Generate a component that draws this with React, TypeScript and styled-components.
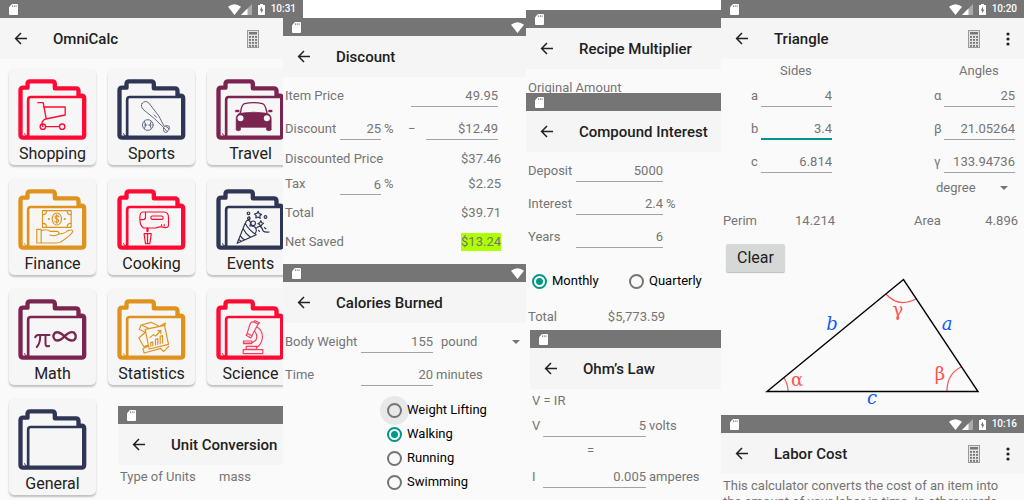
import React from "react";
import styled, { createGlobalStyle } from "styled-components";

const GlobalStyle = createGlobalStyle`
  * { box-sizing: border-box; }
  body { margin: 0; background: #fff; color: #757575; font: 13px/18px Roboto, sans-serif; }
  button, input, select { font: inherit; color: inherit; }
`;

/* ---------- page layout ---------- */

const Collage = styled.main`
  display: grid;
  grid-template-columns: 283fr 243fr 195fr 303fr;
  grid-template-rows: minmax(0, 1fr);
  height: 100vh;
  overflow: hidden;
`;

const Column = styled.div<{ $top?: number }>`
  position: relative;
  display: flex;
  flex-direction: column;
  min-width: 0;
  margin-top: ${(p) => p.$top ?? 0}px;
  background: #fafafa;
`;

const Screen = styled.section<{ $grow?: boolean; $inset?: number }>`
  flex: ${(p) => (p.$grow ? "1 0 auto" : "none")};
  margin-left: ${(p) => p.$inset ?? 0}px;
  background: #fafafa;
  overflow: hidden;
`;

const WideScreen = styled(Screen)`
  width: calc(100% + 20px);
`;

const FloatingScreen = styled(Screen)`
  position: absolute;
  right: 0;
  bottom: 0;
  width: 165px;
  height: 94px;
`;

const StatusBar = styled.div`
  display: flex;
  align-items: center;
  height: 18px;
  padding: 0 7px 0 9px;
  background: #757575;
  color: #fff;
  font-size: 10px;
  font-weight: 500;
`;

const StatusIcons = styled.div<{ $edge?: boolean }>`
  display: flex;
  align-items: center;
  margin-left: auto;
  margin-right: ${(p) => (p.$edge ? -5 : 0)}px;
`;

const Clock = styled.time`
  margin-left: 6px;
`;

const Toolbar = styled.header`
  display: flex;
  align-items: center;
  height: 41px;
  padding-left: 14px;
  background: #f5f5f5;
  color: #212121;
`;

const Title = styled.h2`
  flex: 1;
  margin: 0 0 0 25px;
  font-size: 15px;
  font-weight: 500;
  white-space: nowrap;
`;

const IconButton = styled.button<{ $right?: number }>`
  display: flex;
  margin: 0 ${(p) => p.$right ?? 0}px 0 0;
  padding: 0;
  border: 0;
  background: none;
`;

/* ---------- form parts ---------- */

const Form = styled.div<{ $top?: number; $bottom?: number }>`
  padding: ${(p) => p.$top ?? 2}px 0 ${(p) => p.$bottom ?? 0}px 2px;
  white-space: nowrap;
`;

const Row = styled.div<{ $h?: number; $right?: number }>`
  display: flex;
  align-items: center;
  height: ${(p) => p.$h ?? 33}px;
  padding-right: ${(p) => p.$right ?? 0}px;
`;

const Label = styled.label<{ $w?: number }>`
  flex: none;
  width: ${(p) => (p.$w ? `${p.$w}px` : "auto")};
`;

const Caption = styled.span<{ $w?: number; $left?: number }>`
  flex: none;
  width: ${(p) => (p.$w ? `${p.$w}px` : "auto")};
  margin-left: ${(p) => p.$left ?? 0}px;
`;

const Field = styled.input<{ $w: number; $active?: boolean; $end?: boolean }>`
  width: ${(p) => p.$w}px;
  height: 22px;
  margin: 0 0 0 ${(p) => (p.$end ? "auto" : 0)};
  padding: 1px 0 0;
  border: 0;
  border-bottom: ${(p) => (p.$active ? "2px solid #009688" : "1px solid #a3a3a3")};
  border-radius: 0;
  background: none;
  text-align: right;
  outline: none;
`;

const Unit = styled.span<{ $w?: number }>`
  width: ${(p) => (p.$w ? `${p.$w}px` : "auto")};
  margin-left: 3px;
`;

const Value = styled.output<{ $w?: number; $highlight?: boolean }>`
  width: ${(p) => (p.$w ? `${p.$w}px` : "auto")};
  margin-left: ${(p) => (p.$w ? 0 : "auto")};
  text-align: right;
  background: ${(p) => (p.$highlight ? "#aeff00" : "none")};
`;

const SelectBox = styled.div<{ $gap: number }>`
  display: flex;
  flex: 1;
  align-items: center;
  margin-left: ${(p) => p.$gap}px;
`;

const Select = styled.select`
  flex: 1;
  min-width: 0;
  padding: 0;
  border: 0;
  background: none;
  appearance: none;
`;

const RadioLabel = styled.label<{ $w?: number }>`
  display: flex;
  align-items: center;
  gap: 5px;
  width: ${(p) => (p.$w ? `${p.$w}px` : "auto")};
  color: #000;
`;

const Radio = styled.input.attrs({ type: "radio" })<{ $ripple?: boolean }>`
  appearance: none;
  width: 15px;
  height: 15px;
  margin: 0;
  border: 2px solid #757575;
  border-radius: 50%;
  background: ${(p) => (p.$ripple ? "#e8e8e8" : "none")};
  box-shadow: ${(p) => (p.$ripple ? "0 0 0 7px #e8e8e8" : "none")};
  &:checked {
    border-color: #009688;
    background: radial-gradient(circle, #009688 3px, transparent 4px);
  }
`;

const RadioList = styled.div`
  display: flex;
  flex-direction: column;
  padding: 7px 0 0 102px;
`;

const RadioRow = styled(Row)`
  padding-left: 4px;
`;

/* ---------- category cards ---------- */

const CardGrid = styled.nav`
  display: grid;
  grid-template-columns: repeat(3, 1fr);
  gap: 14px 12px;
  padding: 10px 9px;
`;

const Card = styled.a`
  display: flex;
  flex-direction: column;
  align-items: center;
  gap: 3px;
  height: 96px;
  padding-top: 10px;
  border-radius: 5px;
  background: #f6f6f6;
  box-shadow: 0 2px 2px rgba(0, 0, 0, 0.22), 0 0 2px rgba(0, 0, 0, 0.06);
  color: #212121;
  font-size: 16px;
  line-height: 22px;
  text-decoration: none;
`;

const FolderSvg = styled.svg`
  flex: none;
`;

/* ---------- triangle screen ---------- */

const TriangleGrid = styled.div`
  display: flex;
  justify-content: space-between;
  padding-right: 9px;
`;

const Side = styled.div<{ $left: number }>`
  width: ${(p) => p.$left + 81}px;
  padding-left: ${(p) => p.$left}px;
`;

const SideHeading = styled.div<{ $shift: number }>`
  height: 20px;
  padding: 3px 0 0 ${(p) => p.$shift}px;
`;

const ClearButton = styled.button`
  display: block;
  width: 59px;
  height: 28px;
  margin: 14px 0 0 5px;
  padding: 0;
  border: 0;
  border-radius: 2px;
  background: #d6d7d7;
  box-shadow: 0 1px 1px rgba(0, 0, 0, 0.25);
  color: #212121;
  font-size: 16px;
`;

const Figure = styled.div`
  display: flex;
  justify-content: center;
  height: 143px;
  padding-top: 2px;
`;

const Paragraph = styled.p`
  margin: 0;
  padding: 4px 0 0 2px;
  line-height: 16px;
  white-space: nowrap;
`;

/* ---------- icons ---------- */

const CardIcon = () => (
  <svg width="9" height="11" viewBox="0 0 9 11">
    <path d="M3 0H8Q9 0 9 1V10Q9 11 8 11H1Q0 11 0 10V3.2Z" fill="#fff" />
    <path d="M3.5 1.3v1.8M5.3 1.3v1.8M7.1 1.3v1.8" stroke="#757575" strokeWidth=".8" />
  </svg>
);

const Wifi = () => (
  <svg width="13" height="11" viewBox="0 0 13 11">
    <path d="M0 2.8Q6.5-2.4 13 2.8L6.5 11Z" fill="#fff" />
  </svg>
);

const Signal = () => (
  <svg width="11" height="11" viewBox="0 0 11 11">
    <path d="M11 0V11H0Z" fill="#aaa" />
    <path d="M6.5 4.5V11H0Z" fill="#fff" />
  </svg>
);

const BatterySvg = styled.svg`
  margin-left: 6px;
`;

const Battery = () => (
  <BatterySvg width="7" height="11" viewBox="0 0 7 11">
    <path d="M2 0h3v1h1.4q.6 0 .6.6v8.800q0 .6-.6.6H.6Q0 11 0 10.400V1.600Q0 1 .6 1H2Z" fill="#fff" />
    <path d="M4 2.500 1.700 6.500H3.200V9.500L5.400 5.400H4Z" fill="#757575" />
  </BatterySvg>
);

const ArrowLeft = () => (
  <svg width="14" height="14" viewBox="0 0 14 14" fill="none" stroke="#212121" strokeWidth="1.500">
    <path d="M13 6.500H2M7 1 1.600 6.500 7 12" />
  </svg>
);

const Calculator = () => (
  <svg width="12" height="18" viewBox="0 0 12 18">
    <rect x=".5" y=".5" width="11" height="17" fill="#e4e4e4" stroke="#999" />
    <rect x="2" y="2" width="8" height="2.500" fill="#777" />
    {[6, 9, 12, 15].map((y) =>
      [2, 5, 8].map((x) => <rect key={`${x}-${y}`} x={x} y={y} width="2" height="1.800" fill="#777" />)
    )}
  </svg>
);

const MoreDots = () => (
  <svg width="4" height="14" viewBox="0 0 4 14" fill="#212121">
    <circle cx="2" cy="2" r="1.600" />
    <circle cx="2" cy="7" r="1.600" />
    <circle cx="2" cy="12" r="1.600" />
  </svg>
);

const Caret = () => (
  <svg width="8" height="4" viewBox="0 0 8 4">
    <path d="M0 0H8L4 4Z" fill="#757575" />
  </svg>
);

const RED = "#ff0a33";
const NAVY = "#2f3655";
const PLUM = "#7b2450";
const GOLD = "#df931c";

const Folder = ({ color, children }: { color: string; children?: React.ReactNode }) => (
  <FolderSvg width="69" height="61" viewBox="0 0 206 183" fill="none" stroke={color} strokeLinejoin="round" strokeLinecap="round">
    <path
      strokeWidth="13"
      d="M7 168Q7 176 15 176H190Q198 176 198 168V58Q198 50 190 50H181V36Q181 28 173 28H110V15Q110 7 102 7H36Q28 7 28 15V26H15Q7 26 7 34Z"
    />
    <path strokeWidth="8" d="M30 174V62Q30 54 38 54H194" />
    <path strokeWidth="3" d="M19 164Q20 171 28 172" />
    <g strokeWidth="4">{children}</g>
  </FolderSvg>
);

const Cart = () => (
  <>
    <path d="M59 71H75L84 119Q66 126 74 142M76 84H141V108L83 120M84 143H122" />
    <circle cx="74" cy="143" r="8" />
    <circle cx="132" cy="143" r="8" />
  </>
);

const Baseball = () => (
  <g strokeWidth="3" stroke="#646a86">
    <path d="M75 73Q84 62 95 72L125 111 141 142Q150 138 156 142Q160 149 149 160Q139 162 139 151L139 145 111 118 80 93Q68 81 75 73ZM111 108 118 115M139 145 149 157M145 141 155 149" />
    <circle cx="92" cy="138" r="16" />
    <path d="M82 127Q90 138 82 149M102 127Q94 138 102 149M82 138H89M95 138H102" />
  </g>
);

const Car = () => (
  <g>
    <path d="M73 101Q76 77 85 74Q112 68 139 74Q148 77 152 101" />
    <path d="M58 93H69V99H58ZM157 93H168V99H157Z" fill={PLUM} strokeWidth="1" />
    <path d="M70 103Q112 96 154 103Q166 108 165 122V153Q158 158 151 153V145H73V153Q66 158 60 153V122Q59 108 70 103Z" fill={PLUM} strokeWidth="2" />
    <circle cx="73" cy="118" r="9" fill="#f6f6f6" stroke="none" />
    <circle cx="152" cy="118" r="9" fill="#f6f6f6" stroke="none" />
  </g>
);

const Money = () => (
  <g strokeWidth="3.500">
    <rect x="73" y="65" width="86" height="50" />
    <ellipse cx="116" cy="90" rx="14" ry="18" />
    <path d="M122 83Q116 77 111 83Q110 89 116 90Q123 92 121 97Q116 102 110 97M116 77V103" />
    <path d="M85 66Q85 77 74 77M147 66Q147 77 158 77M74 103Q85 103 85 114M158 103Q147 103 147 114" />
    <circle cx="92" cy="90" r="1.500" />
    <circle cx="140" cy="90" r="1.500" />
    <path d="M56 121H69V162H56ZM69 126Q84 118 96 127H117Q125 129 121 136Q111 143 95 138M122 135Q138 135 149 125Q162 120 164 127Q160 138 129 158Q124 162 112 162H69" />
  </g>
);

const Mixer = () => (
  <g strokeWidth="3.500">
    <path d="M76 69H140Q154 69 154 86V108Q154 116 144 116Q130 111 116 117H79Q68 110 68 91Q67 70 76 69ZM68 92H78Q85 92 85 85V70" />
    <rect x="101" y="81" width="37" height="10" rx="5" />
    <path strokeWidth="7" d="M91 119V126" />
    <path d="M81 134H102V137L98 164H85L81 137ZM91 135V164M133 107V110M141 107V110" />
  </g>
);

const Party = () => (
  <g strokeWidth="3.500">
    <path d="M63 163 87 103Q98 124 120 137ZM81 119Q88 134 103 145M72 140Q77 148 86 153M67 151 75 157" />
    <circle cx="111" cy="103" r="7" />
    <path d="M88 103Q90 92 98 94 106 98 101 111Q116 108 120 121 122 128 116 134M119 119Q133 102 141 126 146 131 159 129M99 92V83" />
    <circle cx="97" cy="73" r="4" />
    <circle cx="98" cy="88" r="4" />
    <circle cx="148" cy="84" r="4" />
    <path d="M126 67 129 74 136 76 131 81 132 88 125 84 119 87 120 80 115 75 122 73ZM134 95 137 101 142 103 137 107 134 112 130 106 125 104 131 101Z" />
    <path d="M127 124 130 127M145 116 149 119" />
  </g>
);

const PiInfinity = () => (
  <g>
    <path strokeWidth="6" d="M51 115Q54 107 62 108H94M66 109Q67 132 56 144M82 109V135Q82 144 93 141" />
    <path strokeWidth="7" d="M139 112Q122 96 111 101Q100 112 111 123Q122 129 139 112Q156 95 168 101Q178 112 168 123Q156 129 139 112Z" />
  </g>
);

const Chart = () => (
  <g strokeWidth="3.500">
    <path d="M84 91 142 79 154 136 96 150ZM93 87 72 78 66 91 76 96M72 78 102 70 123 80M142 81 145 72 130 80M76 96 84 100M82 102 65 117 80 143 92 139M92 142 77 149 81 162 131 148 139 158 155 142" />
    <path d="M101 142V131L107 129V140M115 138V121L122 119V136M129 134V112L136 110V132M98 116 109 107 116 111 131 94M122 95H131V104" />
  </g>
);

const Microscope = () => (
  <g strokeWidth="3.500" stroke="#f83e5c">
    <path d="M102 74Q105 68 112 69L126 75 107 110 93 103ZM112 69 116 65 130 71 126 76M93 104 90 109 104 117 108 111" />
    <path d="M122 84Q142 94 138 121Q134 139 120 146M116 98Q125 108 120 122Q113 132 100 132H83M82 126H107V134H82ZM90 142H122V151H90ZM81 152H140V164H81Z" />
  </g>
);

/* ---------- shared pieces ---------- */

type TopBarsProps = { title: string; time?: string; edge?: boolean; calc?: boolean; more?: boolean };

const TopBars = ({ title, time, edge, calc, more }: TopBarsProps) => (
  <>
    <StatusBar>
      <CardIcon />
      <StatusIcons $edge={edge}>
        {(time || edge) && <Wifi />}
        {time && (
          <>
            <Signal />
            <Battery />
            <Clock>{time}</Clock>
          </>
        )}
      </StatusIcons>
    </StatusBar>
    <Toolbar>
      <IconButton aria-label="Back">
        <ArrowLeft />
      </IconButton>
      <Title>{title}</Title>
      {calc && (
        <IconButton aria-label="Calculator" $right={more ? 26 : 44}>
          <Calculator />
        </IconButton>
      )}
      {more && (
        <IconButton aria-label="More options" $right={14}>
          <MoreDots />
        </IconButton>
      )}
    </Toolbar>
  </>
);

const categories = [
  { name: "Shopping", color: RED, art: <Cart /> },
  { name: "Sports", color: NAVY, art: <Baseball /> },
  { name: "Travel", color: PLUM, art: <Car /> },
  { name: "Finance", color: GOLD, art: <Money /> },
  { name: "Cooking", color: RED, art: <Mixer /> },
  { name: "Events", color: NAVY, art: <Party /> },
  { name: "Math", color: PLUM, art: <PiInfinity /> },
  { name: "Statistics", color: GOLD, art: <Chart /> },
  { name: "Science", color: RED, art: <Microscope /> },
  { name: "General", color: NAVY, art: null },
];

const sides = [
  ["a", "4"],
  ["b", "3.4"],
  ["c", "6.814"],
];
const angles = [
  ["α", "25"],
  ["β", "21.05264"],
  ["γ", "133.94736"],
];

const TriangleDrawing = () => (
  <svg width="221" height="134" viewBox="762 274 221 134" fontFamily="'DejaVu Serif', serif" fontSize="18" textAnchor="middle">
    <g fill="none" stroke="#ff5252" strokeWidth="1.200">
      <path d="M784 378Q788 384 788 391M886 294Q898 308 916 299M961 367Q947 374 947 391" />
    </g>
    <path d="M767 391.500 903.500 279.500 978 391.500Z" fill="none" stroke="#000" strokeWidth="1.400" />
    <g fill="#0d5bff" fontStyle="italic">
      <text x="832" y="330">b</text>
      <text x="947" y="330">a</text>
      <text x="872" y="404">c</text>
    </g>
    <g fill="#ff5252">
      <text x="797" y="386">α</text>
      <text x="940" y="380">β</text>
      <text x="898" y="316">γ</text>
    </g>
  </svg>
);

export default function App() {
  return (
    <>
      <GlobalStyle />
      <Collage>
        <Column>
          <WideScreen $grow>
            <TopBars title="OmniCalc" time="10:31" calc />
            <CardGrid>
              {categories.map((c) => (
                <Card key={c.name} href={`#${c.name.toLowerCase()}`}>
                  <Folder color={c.color}>{c.art}</Folder>
                  {c.name}
                </Card>
              ))}
            </CardGrid>
          </WideScreen>
          <FloatingScreen>
            <TopBars title="Unit Conversion" />
            <Form>
              <Row $h={20}>
                <Label $w={99} htmlFor="units">Type of Units</Label>
                <Select id="units">
                  <option>mass</option>
                </Select>
              </Row>
            </Form>
          </FloatingScreen>
        </Column>

        <Column $top={18}>
          <Screen>
            <TopBars title="Discount" edge />
            <Form $bottom={10}>
              <Row $right={28}>
                <Label htmlFor="price">Item Price</Label>
                <Field id="price" $w={87} $end defaultValue="49.95" />
              </Row>
              <Row $right={28}>
                <Label $w={55} htmlFor="discount">Discount</Label>
                <Field id="discount" $w={41} defaultValue="25" />
                <Unit $w={24}>%</Unit>
                <span>−</span>
                <Field aria-label="Discount amount" $w={72} $end defaultValue="$12.49" />
              </Row>
              <Row $h={27} $right={25}>
                <span>Discounted Price</span>
                <Value>$37.46</Value>
              </Row>
              <Row $h={24} $right={25}>
                <Label $w={55} htmlFor="tax">Tax</Label>
                <Field id="tax" $w={41} defaultValue="6" />
                <Unit>%</Unit>
                <Value>$2.25</Value>
              </Row>
              <Row $h={34} $right={25}>
                <span>Total</span>
                <Value>$39.71</Value>
              </Row>
              <Row $h={24} $right={25}>
                <span>Net Saved</span>
                <Value $highlight>$13.24</Value>
              </Row>
            </Form>
          </Screen>
          <Screen $grow>
            <TopBars title="Calories Burned" edge />
            <Form>
              <Row $right={6}>
                <Label $w={76} htmlFor="weight">Body Weight</Label>
                <Field id="weight" $w={72} defaultValue="155" />
                <SelectBox $gap={8}>
                  <Select aria-label="Weight unit">
                    <option>pound</option>
                  </Select>
                  <Caret />
                </SelectBox>
              </Row>
              <Row>
                <Label $w={76} htmlFor="time">Time</Label>
                <Field id="time" $w={72} defaultValue="20" />
                <Unit>minutes</Unit>
              </Row>
              <RadioList>
                {["Weight Lifting", "Walking", "Running", "Swimming"].map((name, i) => (
                  <Row key={name} $h={24}>
                    <RadioLabel>
                      <Radio name="activity" defaultChecked={i === 1} $ripple={i === 0} />
                      {name}
                    </RadioLabel>
                  </Row>
                ))}
              </RadioList>
            </Form>
          </Screen>
        </Column>

        <Column $top={10}>
          <Screen>
            <TopBars title="Recipe Multiplier" />
            <Form $top={14}>
              <Row $h={10}>Original Amount</Row>
            </Form>
          </Screen>
          <Screen>
            <TopBars title="Compound Interest" />
            <Form $bottom={5}>
              <Row>
                <Label $w={48} htmlFor="deposit">Deposit</Label>
                <Field id="deposit" $w={87} defaultValue="5000" />
              </Row>
              <Row>
                <Label $w={48} htmlFor="interest">Interest</Label>
                <Field id="interest" $w={87} defaultValue="2.4" />
                <Unit>%</Unit>
              </Row>
              <Row>
                <Label $w={48} htmlFor="years">Years</Label>
                <Field id="years" $w={87} defaultValue="6" />
              </Row>
              <RadioRow $h={56}>
                <RadioLabel $w={97}>
                  <Radio name="period" defaultChecked />
                  Monthly
                </RadioLabel>
                <RadioLabel>
                  <Radio name="period" />
                  Quarterly
                </RadioLabel>
              </RadioRow>
              <Row $h={16}>
                <Caption $w={48}>Total</Caption>
                <Value $w={89}>$5,773.59</Value>
              </Row>
            </Form>
          </Screen>
          <Screen $grow $inset={4}>
            <TopBars title="Ohm’s Law" />
            <Form $top={4}>
              <Row $h={16}>V = IR</Row>
              <Row>
                <Label $w={11} htmlFor="volts">V</Label>
                <Field id="volts" $w={103} defaultValue="5" />
                <Unit>volts</Unit>
              </Row>
              <Row $h={18}>
                <Caption $left={55}>=</Caption>
              </Row>
              <Row>
                <Label $w={11} htmlFor="amps">I</Label>
                <Field id="amps" $w={103} defaultValue="0.005" />
                <Unit>amperes</Unit>
              </Row>
            </Form>
          </Screen>
        </Column>

        <Column>
          <Screen>
            <TopBars title="Triangle" time="10:20" calc more />
            <TriangleGrid>
              <Side $left={30}>
                <SideHeading $shift={29}>Sides</SideHeading>
                {sides.map(([name, value]) => (
                  <Row key={name}>
                    <Label $w={10} htmlFor={`side-${name}`}>{name}</Label>
                    <Field id={`side-${name}`} $w={71} $active={name === "b"} defaultValue={value} />
                  </Row>
                ))}
              </Side>
              <Side $left={0}>
                <SideHeading $shift={25}>Angles</SideHeading>
                {angles.map(([name, value]) => (
                  <Row key={name}>
                    <Label $w={10} htmlFor={`angle-${name}`}>{name}</Label>
                    <Field id={`angle-${name}`} $w={71} defaultValue={value} />
                  </Row>
                ))}
                <Row $h={20} $right={7}>
                  <SelectBox $gap={2}>
                    <Select aria-label="Angle unit">
                      <option>degree</option>
                    </Select>
                    <Caret />
                  </SelectBox>
                </Row>
              </Side>
            </TriangleGrid>
            <Form $top={14}>
              <Row $h={18} $right={6}>
                <Caption $w={35}>Perim</Caption>
                <Value $w={77}>14.214</Value>
                <Caption $left={79}>Area</Caption>
                <Value>4.896</Value>
              </Row>
            </Form>
            <ClearButton>Clear</ClearButton>
            <Figure>
              <TriangleDrawing />
            </Figure>
          </Screen>
          <Screen $grow>
            <TopBars title="Labor Cost" time="10:16" calc more />
            <Paragraph>
              This calculator converts the cost of an item into
              <br />
              the amount of your labor in time. In other words,
            </Paragraph>
          </Screen>
        </Column>
      </Collage>
    </>
  );
}
